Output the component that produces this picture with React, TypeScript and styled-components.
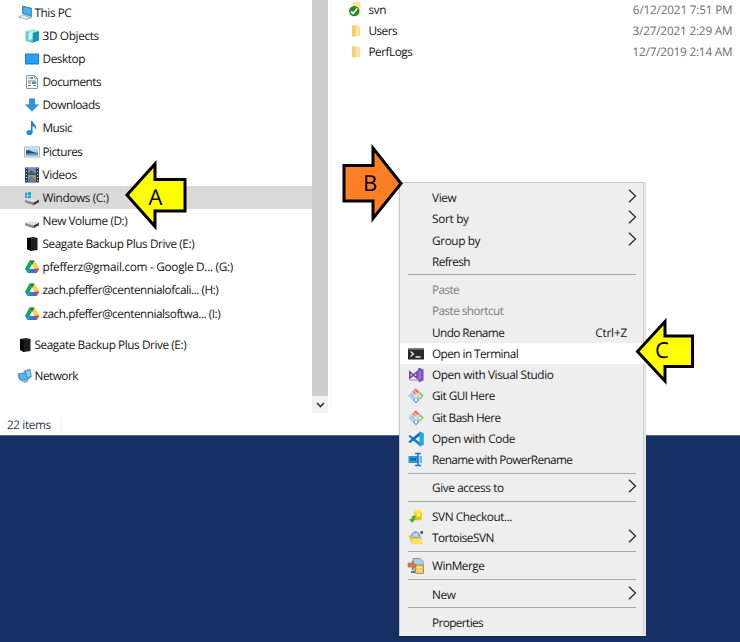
import React from "react";
import styled, { createGlobalStyle } from "styled-components";

const Global = createGlobalStyle`
  * { box-sizing: border-box; }
  html, body { margin: 0; padding: 0; overflow: hidden; }
`;

const Desktop = styled.main`
  position: relative;
  width: 740px;
  height: 642px;
  overflow: hidden;
  background: #143065;
  font-family: "Open Sans", "Noto Sans", sans-serif;
  font-size: 11.8px;
  text-rendering: geometricPrecision;
  color: #141414;
`;

const ExplorerWindow = styled.section`
  display: flex;
  flex-direction: column;
  height: 436px;
  background: #fff;
  border-bottom: 1px solid #54698f;
`;

const Body = styled.div`
  display: flex;
  height: 413px;
`;

const Sidebar = styled.nav`
  width: 312px;
  padding-top: 1px;
`;

const TreeRow = styled.div<{ $root?: boolean; $selected?: boolean; $gap?: boolean }>`
  display: flex;
  align-items: center;
  height: 23.17px;
  margin-top: ${(p) => (p.$gap ? "7.8px" : 0)};
  padding-left: ${(p) => (p.$root ? 16.5 : 23.5)}px;
  gap: ${(p) => (p.$root ? 2 : 3)}px;
  background: ${(p) => (p.$selected ? "#d9d9d9" : "transparent")};
  white-space: nowrap;
`;

const Icon = styled.svg`
  flex: none;
  width: 16px;
  height: 16px;
  overflow: visible;
`;

const Label = styled.span<{ $ls?: number }>`
  letter-spacing: ${(p) => p.$ls ?? -0.4}px;
  line-height: 16px;
  white-space: nowrap;
`;

const Scrollbar = styled.div`
  display: flex;
  flex-direction: column;
  width: 16px;
  background: #cdcdcd;
`;

const ScrollThumb = styled.div`
  flex: 1;
`;

const ScrollButton = styled.div`
  display: flex;
  align-items: center;
  justify-content: center;
  height: 17px;
  background: #f1f1f1;
`;

const FileList = styled.div`
  flex: 1;
  margin-left: 2px;
  border-left: 1px solid #f8f8f8;
`;

const FileRow = styled.div`
  display: flex;
  align-items: center;
  height: 20.8px;
  padding: 0 7.5px 0 16.5px;
  gap: 5px;
`;

const FileName = styled(Label)`
  flex: 1;
`;

const FileDate = styled(Label)`
  color: #6d6d6d;
`;

const StatusBar = styled.footer`
  display: flex;
  align-items: center;
  height: 22px;
  padding: 2px 0 0 7px;
  gap: 10px;
  color: #2c3a52;
`;

const StatusDivider = styled.i`
  width: 1px;
  height: 13px;
  background: #eee;
`;

const Menu = styled.div`
  position: absolute;
  left: 399px;
  top: 182px;
  width: 247px;
  height: 454px;
  padding: 4.6px 0 0;
  background: #eee;
  border: 1px solid #c9c9c9;
  border-right: 2px solid #e6e6e6;
  border-bottom: 1px solid #f2f2f2;
  box-shadow: 0 1px 1px rgba(0, 0, 0, 0.25), inset -1px 0 #cfcfcf;
`;

const MenuItem = styled.div<{ $active?: boolean; $disabled?: boolean }>`
  display: flex;
  align-items: center;
  height: 21.22px;
  padding-left: 8px;
  padding-right: 7.5px;
  background: ${(p) => (p.$active ? "#fff" : "transparent")};
  color: ${(p) => (p.$disabled ? "#7d7d7d" : "#141414")};
`;

const IconSlot = styled.span`
  display: flex;
  width: 24px;
`;

const Shortcut = styled(Label)`
  margin-left: auto;
  margin-right: 9.5px;
`;

const Chevron = styled.svg`
  width: 9px;
  height: 14px;
  margin-left: auto;
  margin-bottom: 4px;
`;

const Separator = styled.hr`
  width: 228px;
  height: 1px;
  margin: 2px 0 4.15px 8px;
  border: 0;
  background: #a8a8a8;
`;

const Marker = styled.svg<{ $x: number; $y: number; $w: number; $h: number }>`
  position: absolute;
  left: ${(p) => p.$x}px;
  top: ${(p) => p.$y}px;
  width: ${(p) => p.$w}px;
  height: ${(p) => p.$h}px;
  font-family: "Open Sans", sans-serif;
  font-size: 22px;
`;

const DriveBase = () => (
  <g>
    <path d="m1 10 7-2 7 2-5.500 2.600Z" fill="#e2e2e2" stroke="#c6c6c6" strokeWidth=".4" />
    <path d="m1 10 8.500 2.400v2.800L1 12.200Z" fill="#858585" />
    <path d="m9.500 12.400 5.500-2.600v2.400l-5.500 3Z" fill="#3d3d3d" />
  </g>
);

const icons: Record<string, React.ReactNode> = {
  pc: (
    <>
      <path d="m5.500 1 9 2.200v8.300l-9-3Z" fill="#168bd1" stroke="#4a6d88" strokeWidth=".7" />
      <path d="m6.300 2 7.500 1.900v6.500L6.300 8Z" fill="#42b4f4" />
      <path d="m1 12.200 5-2.500 9 2.800-5 2Z" fill="#c4cdd3" stroke="#8b98a0" strokeWidth=".5" />
      <path d="m3.500 12 2.500-1.200 5.500 1.700-2 1Z" fill="#edf1f3" />
    </>
  ),
  cube: (
    <>
      <path d="M1.500 3 9 1l6 2-6.500 2Z" fill="#9be8ef" />
      <path d="M1.500 3l7 2v10l-7-2Z" fill="#62cbd6" />
      <path d="M8.500 5 15 3v9.500L8.500 15Z" fill="#1596b4" />
      <path d="m4.500 5 4-1.500V11L4.500 12Z" fill="#c4f4f5" />
    </>
  ),
  desktop: (
    <>
      <path d="M1 2.500h14v11H1z" fill="#1583d0" />
      <path d="M2 3.500h12v8.500H2z" fill="#28a0f4" />
    </>
  ),
  doc: (
    <>
      <path d="M2.500 1.500h8l3 3v10h-11z" fill="#fafafa" stroke="#8b969c" />
      <path d="M10.500 1.500v3h3" fill="none" stroke="#8b969c" />
      <path d="M4 4h3M4 7h8M4 9h3M4 11.500h3m2 0h3" stroke="#73828c" />
      <path d="M8 8h4v2H8zM7 3h2v2H7z" fill="#3090bf" />
    </>
  ),
  down: <path d="M5.300 1.800h5.400v6h3.800L8 14.300 1.500 7.800h3.800Z" fill="#3192dc" stroke="#2a7cc0" strokeWidth=".6" />,
  music: (
    <>
      <ellipse cx="5.500" cy="12.500" rx="3.100" ry="2.600" fill="#1c93d8" />
      <path d="M7 1h1.500c.3 3 4.900 3.400 3.500 9-.7-2.800-1.800-3.700-3.500-3.800v6H7Z" fill="#1c83c8" />
    </>
  ),
  picture: (
    <>
      <path d="M.5 3h15v10H.5z" fill="#f5f8fa" stroke="#a7b2ba" />
      <path d="M2 4.500h12v7H2z" fill="#a5d4ee" />
      <path d="M2 6.500c4-1 6 2 12 2.500v1H2Z" fill="#1c536a" />
      <path d="M2 9.500c5-.5 7-.5 12 0v2H2Z" fill="#5f9db8" />
    </>
  ),
  video: (
    <>
      <path d="M1 .5h14v15H1z" fill="#34404d" />
      <path d="M4 1h8v6H4z" fill="#6891bd" />
      <path d="m4 6 3-3 5 4v.5H4z" fill="#3e5f95" />
      <path d="M4 8h8v7H4z" fill="#b58e50" />
      <path d="m4 12 3-3 5 5v1H4z" fill="#5780a4" />
      <path d="M2.500 1v14m11-14v14" stroke="#c0ccd3" strokeDasharray="1 2" />
    </>
  ),
  windows: (
    <>
      <path d="M1 2.800l2.300-.3V5H1Zm2.900-.4L7 2v3H3.900ZM1 5.600h2.300V8L1 7.700Zm2.900 0H7v3l-3.100-.5Z" fill="#16a7df" />
      <DriveBase />
    </>
  ),
  drive: <DriveBase />,
  seagate: (
    <>
      <path d="m3 2 6-1 4.500 1v12L7 15l-4-2Z" fill="#1c1c1c" />
      <path d="m3 2 4 1v12l-4-2Z" fill="#050505" />
      <path d="m7 3 5-1" stroke="#4b4b4b" strokeWidth=".6" />
    </>
  ),
  gdrive: (
    <>
      <path d="M5.500 1.500 1 9.800l2.300 4L8 6Z" fill="#0da960" />
      <path d="M5.500 1.500h5l4.700 8.300h-4.800Z" fill="#ffcf42" />
      <path d="m3.300 14 2.300-4.200h9.600L12.600 14Z" fill="#3276d9" />
      <path d="m10.400 9.800h4.800L12.600 14Z" fill="#e64435" />
      <path d="m5.500 1.500 2.500 4.500 2.500-4.500Z" fill="#078347" />
      <path d="M8 6 5.700 9.800h4.700Z" fill="#fff" />
    </>
  ),
  network: (
    <>
      <path d="m7 3 6-2 1.500 7.500-5 4Z" fill="#3492c6" stroke="#5e8cac" strokeWidth=".6" />
      <path d="m8 3.500 4.500-1.300 1.200 5.500-3.700 2.500Z" fill="#7bd0f3" />
      <path d="m1 5.500 8-1 2 7-6 1.500-3-2Z" fill="#3b9ed5" stroke="#5a87a2" strokeWidth=".6" />
      <path d="m2 6.200 6.300-.8 1.500 5.400-5 1.200Z" fill="#54b8ec" />
      <path d="m5 14 5-2 2 1-4 2Z" fill="#93adbd" />
    </>
  ),
  folder: (
    <>
      <path d="M4 2h5v1h3v10H4z" fill="#ffdf8b" />
      <path d="m4 2 3.500 2v9L7 14l-3-1Z" fill="#f2cc76" />
      <path d="M7.500 4v9l4.500-.2V3h-3Z" fill="#ffe09a" />
    </>
  ),
  svn: (
    <>
      <path d="M5 0h7.500v13H5z" fill="#ffe092" />
      <circle cx="6.200" cy="9.100" r="5.200" fill="#238a25" />
      <path d="m3 9.500 2.200 2 4-5" fill="none" stroke="#fff" strokeWidth="1.700" />
    </>
  ),
  terminal: (
    <>
      <path d="M0 2.500h16v11H0z" fill="#292929" />
      <path d="M0 2.500h16V4H0z" fill="#666" />
      <path d="m2.500 5.500 3 2.500-3 2.500M7.500 11h5" fill="none" stroke="#eee" strokeWidth="1.300" />
    </>
  ),
  vs: (
    <>
      <path d="m11 .8 4.500 1.700v11L11 15.300l-1-1.300V2Z" fill="#7950b7" />
      <path d="M1.800 5v6L9 5v6Z" fill="none" stroke="#6840a7" strokeWidth="1.600" />
      <path d="M1.500 13h9.500" stroke="#b493e1" strokeWidth="1.300" />
      <path d="M12 4v8" stroke="#a98bd5" strokeWidth="1.500" />
    </>
  ),
  git: (
    <>
      <path d="m7.700.2 3.800 3.600-3.700 3.700L4.100 3.800Z" fill="#ee7472" />
      <path d="M3.800 4.100 7.500 7.800l-3.700 3.600L.1 7.800Z" fill="#b3c8ee" />
      <path d="m12.200 4.100 3.700 3.700-3.700 3.600-3.700-3.600Z" fill="#8ed071" />
      <path d="m8 8.200 3.700 3.600L8 15.500l-3.700-3.700Z" fill="#75a5ec" />
      <path d="m5.800 2.500 5.500 5.300M8 5v7" stroke="#fff" strokeWidth=".9" />
      <circle cx="8" cy="12" r="1.200" fill="#fff" />
      <circle cx="11.700" cy="8" r="1.200" fill="#fff" />
    </>
  ),
  code: (
    <>
      <path d="M.3 5.300 2 4l10 7.500v3.800Z" fill="#1685d1" />
      <path d="M.3 10.700 2 12l10-7.500V.7Z" fill="#0870b4" />
      <path d="m11.500.3 4.300 2v11.400l-4.300 2Z" fill="#27a3e8" />
    </>
  ),
  rename: (
    <>
      <path d="M.5 4H10v7H.5z" fill="#2a98d8" />
      <path d="M2.500 6H8v2.500H2.500z" fill="#1265a8" />
      <path d="M11.500 4H14v7h-2.500z" fill="#59bdf0" />
      <path d="M7 1.500h6M10 1.500V14M7 13.500h6" stroke="#2273a6" strokeWidth="1.500" />
    </>
  ),
  checkout: (
    <>
      <path d="M6 2h8v7.500H6z" fill="#f4d51d" />
      <ellipse cx="10" cy="2" rx="4" ry="1.700" fill="#ffe957" />
      <ellipse cx="10" cy="9.500" rx="4" ry="1.800" fill="#e6c60e" />
      <path d="M9 4h3v3H9z" fill="#fff08c" />
      <path d="M7 6.500c-2.500 0-3.500 1-3.500 3.500H1l3 4 3.700-4H6c0-1 .5-1.500 2-1.500Z" fill="#3eb334" />
    </>
  ),
  tortoise: (
    <>
      <path d="M3 7.500C3 0 12 0 12 7.500Z" fill="#a5bfe3" stroke="#6486b7" />
      <path d="m5 3 5 4m0-4L5 7" stroke="#d3e2f5" />
      <circle cx="13.700" cy="2.500" r="1.400" fill="#294c78" />
      <path d="M.5 5.500h3l1.500 2h9v6.500H4Z" fill="#e0bd42" />
      <path d="M3.500 8.500H15L13 14H4Z" fill="#ffe16b" />
    </>
  ),
  winmerge: (
    <>
      <path d="M5 .5h7l3 3V12H5z" fill="#a7d1e4" stroke="#7198ae" />
      <path d="M7.500 7h8v8.500h-8z" fill="#f0cb52" stroke="#93844c" strokeWidth=".8" />
      <path d="M9.500 9.500h4.500M9.500 12.500h4.500" stroke="#fff2b5" />
      <path d="M0 5h4V3l4.500 4.500L4 11.500V9H0Z" fill="#dd774b" stroke="#9d5c47" strokeWidth=".5" />
      <path d="M3 13h4v2H3z" fill="#4e7290" />
    </>
  ),
};

const Glyph = ({ name }: { name: string }) => <Icon viewBox="0 0 16 16">{icons[name]}</Icon>;

type Tree = { icon: string; text: string; ls?: number; root?: boolean; gap?: boolean; selected?: boolean };
const tree: Tree[] = [
  { icon: "pc", text: "This PC", root: true, ls: -0.44 },
  { icon: "cube", text: "3D Objects", ls: -0.35 },
  { icon: "desktop", text: "Desktop", ls: -0.42 },
  { icon: "doc", text: "Documents", ls: -0.5 },
  { icon: "down", text: "Downloads", ls: -0.46 },
  { icon: "music", text: "Music", ls: -0.5 },
  { icon: "picture", text: "Pictures", ls: -0.55 },
  { icon: "video", text: "Videos", ls: -0.4 },
  { icon: "windows", text: "Windows (C:)", selected: true, ls: -0.38 },
  { icon: "drive", text: "New Volume (D:)", ls: -0.43 },
  { icon: "seagate", text: "Seagate Backup Plus Drive (E:)", ls: -0.43 },
  { icon: "gdrive", text: "pfefferz@gmail.com - Google D... (G:)", ls: -0.29 },
  { icon: "gdrive", text: "zach.pfeffer@centennialofcali... (H:)", ls: -0.48 },
  { icon: "gdrive", text: "zach.pfeffer@centennialsoftwa... (I:)", ls: -0.48 },
  { icon: "seagate", text: "Seagate Backup Plus Drive (E:)", root: true, gap: true, ls: -0.43 },
  { icon: "network", text: "Network", root: true, gap: true, ls: -0.5 },
];

type File = { icon: string; name: string; date: string; ls?: number };
const files: File[] = [
  { icon: "svn", name: "svn", date: "6/12/2021 7:51 PM", ls: -0.4 },
  { icon: "folder", name: "Users", date: "3/27/2021 2:29 AM", ls: -0.55 },
  { icon: "folder", name: "PerfLogs", date: "12/7/2019 2:14 AM", ls: -0.5 },
];

type Entry = { text: string; icon?: string; ls?: number; sub?: boolean; disabled?: boolean; active?: boolean; keys?: string };
const groups: Entry[][] = [
  [
    { text: "View", sub: true },
    { text: "Sort by", sub: true, ls: -0.3 },
    { text: "Group by", sub: true, ls: -0.38 },
    { text: "Refresh", ls: -0.62 },
  ],
  [
    { text: "Paste", disabled: true, ls: -0.6 },
    { text: "Paste shortcut", disabled: true, ls: -0.56 },
    { text: "Undo Rename", keys: "Ctrl+Z", ls: -0.57 },
    { text: "Open in Terminal", icon: "terminal", active: true, ls: -0.57 },
    { text: "Open with Visual Studio", icon: "vs", ls: -0.4 },
    { text: "Git GUI Here", icon: "git", ls: -0.53 },
    { text: "Git Bash Here", icon: "git", ls: -0.55 },
    { text: "Open with Code", icon: "code", ls: -0.38 },
    { text: "Rename with PowerRename", icon: "rename", ls: -0.64 },
  ],
  [{ text: "Give access to", sub: true, ls: -0.4 }],
  [
    { text: "SVN Checkout...", icon: "checkout", ls: -0.43 },
    { text: "TortoiseSVN", icon: "tortoise", sub: true, ls: -0.5 },
  ],
  [{ text: "WinMerge", icon: "winmerge", ls: -0.48 }],
  [{ text: "New", sub: true }],
  [{ text: "Properties", ls: -0.6 }],
];

export default function App() {
  return (
    <Desktop>
      <Global />
      <ExplorerWindow>
        <Body>
          <Sidebar>
            {tree.map((t, i) => (
              <TreeRow key={i} $root={t.root} $gap={t.gap} $selected={t.selected}>
                <Glyph name={t.icon} />
                <Label $ls={t.ls}>{t.text}</Label>
              </TreeRow>
            ))}
          </Sidebar>
          <Scrollbar>
            <ScrollThumb />
            <ScrollButton>
              <svg width="9" height="6" viewBox="0 0 9 6">
                <path d="m1 1 3.500 3.600L8 1" fill="none" stroke="#333" strokeWidth="1.500" />
              </svg>
            </ScrollButton>
          </Scrollbar>
          <FileList>
            {files.map((f) => (
              <FileRow key={f.name}>
                <Glyph name={f.icon} />
                <FileName $ls={f.ls}>{f.name}</FileName>
                <FileDate $ls={-0.2}>{f.date}</FileDate>
              </FileRow>
            ))}
          </FileList>
        </Body>
        <StatusBar>
          <Label>22 items</Label>
          <StatusDivider />
        </StatusBar>
      </ExplorerWindow>

      <Menu>
        {groups.map((g, gi) => (
          <React.Fragment key={gi}>
            {gi > 0 && <Separator />}
            {g.map((m) => (
              <MenuItem key={m.text} $active={m.active} $disabled={m.disabled}>
                <IconSlot>{m.icon && <Glyph name={m.icon} />}</IconSlot>
                <Label $ls={m.ls}>{m.text}</Label>
                {m.keys && <Shortcut $ls={-0.2}>{m.keys}</Shortcut>}
                {m.sub && (
                  <Chevron viewBox="0 0 9 14">
                    <path d="m1 .8 6.500 6.200L1 13.200" fill="none" stroke="#222" strokeWidth="1.200" />
                  </Chevron>
                )}
              </MenuItem>
            ))}
          </React.Fragment>
        ))}
      </Menu>

      <Marker $x={120} $y={158} $w={70} $h={74} viewBox="120 158 70 74">
        <path d="M127 195 155 164V179.500h30v31.500H155v15.500Z" fill="#ff0" stroke="#000" strokeWidth="3" />
        <text x="148.500" y="205">A</text>
      </Marker>
      <Marker $x={338} $y={142} $w={68} $h={82} viewBox="338 142 68 82">
        <path d="M401 183.500 373 148v17.500h-29V201H373v17.500Z" fill="#ff7f27" stroke="#000" strokeWidth="3" />
        <text x="363" y="191">B</text>
      </Marker>
      <Marker $x={632} $y={315} $w={66} $h={72} viewBox="632 315 66 72">
        <path d="M637.500 351.500 665 321.500V336h27.500v30.500H665V381Z" fill="#ff0" stroke="#000" strokeWidth="3" />
        <text x="655" y="357.500">C</text>
      </Marker>
    </Desktop>
  );
}
